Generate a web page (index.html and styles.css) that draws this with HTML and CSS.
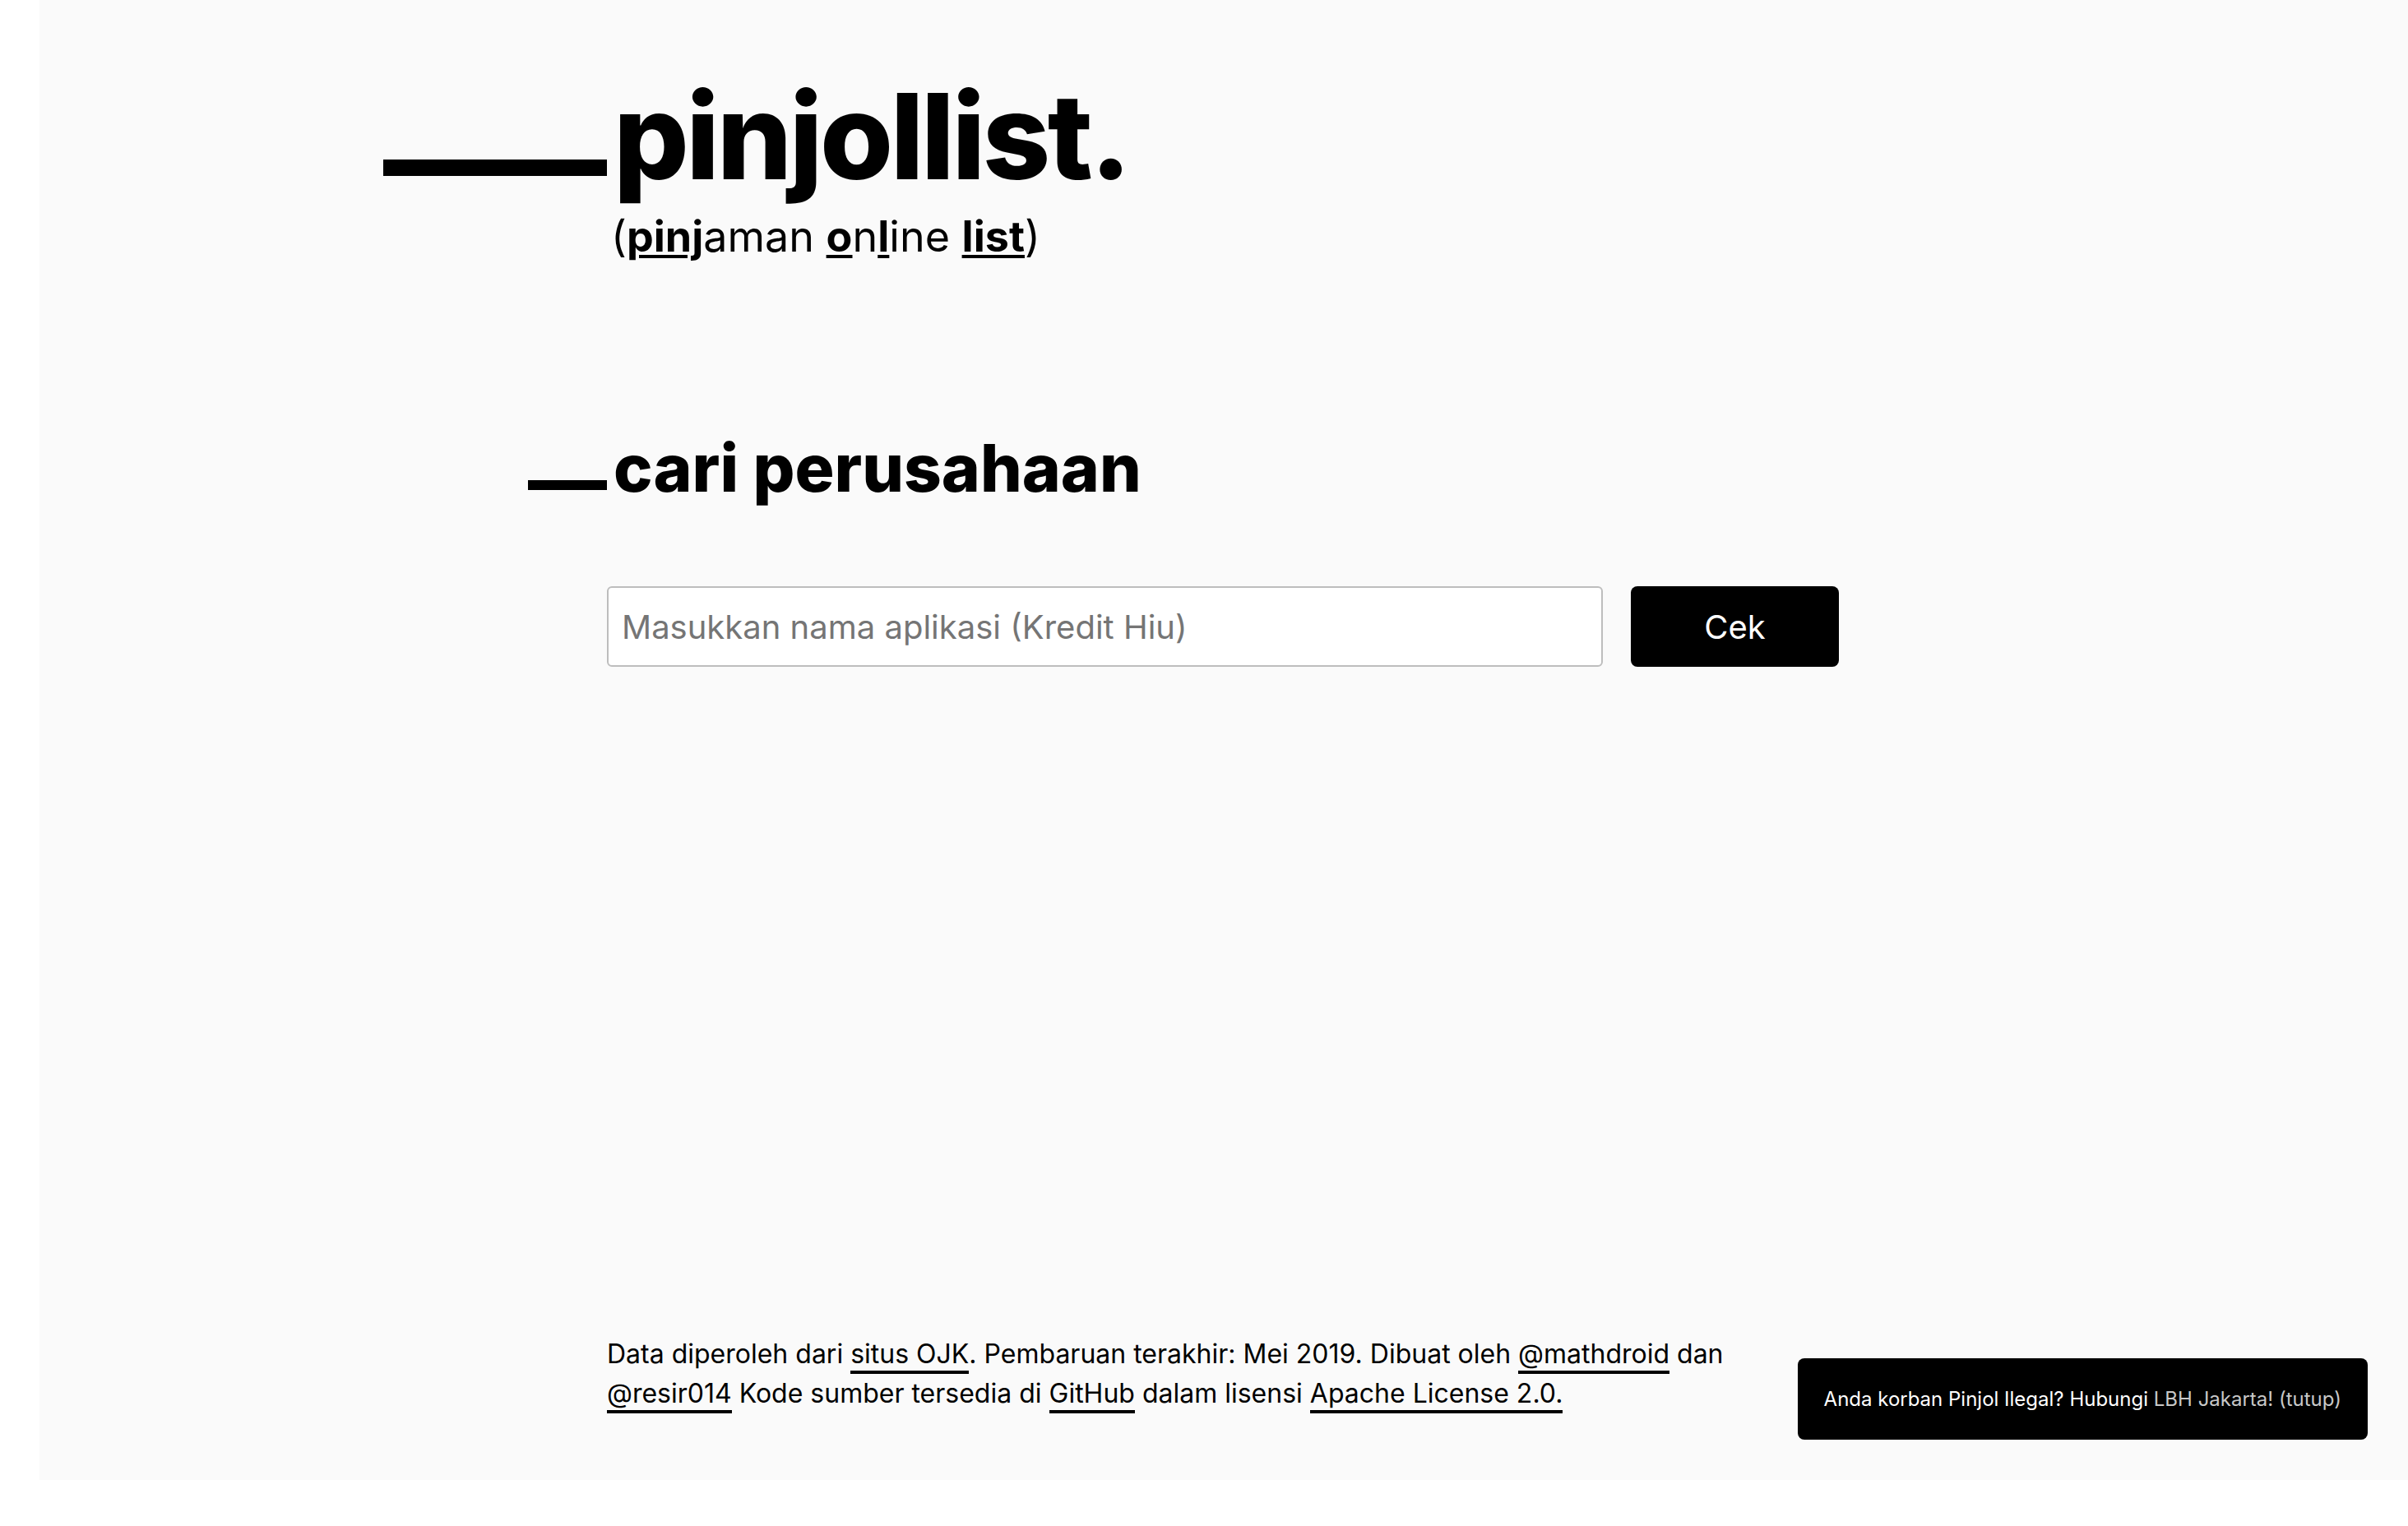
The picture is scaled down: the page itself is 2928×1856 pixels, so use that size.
FILE: index.html
```html
<!DOCTYPE html>
<html lang="id">
<head>
<meta charset="utf-8">
<title>pinjollist.</title>
<link rel="stylesheet" href="styles.css">
</head>
<body>
<div class="page">
  <main class="content">
    <header class="masthead">
      <h1 class="title"><span class="dash dash-lg"></span>pinjollist.</h1>
      <p class="subtitle">(<u><b>pinj</b></u>aman <u><b>o</b></u>n<u><b>l</b></u>ine <u><b>list</b></u>)</p>
    </header>
    <section class="search">
      <h2 class="section-title"><span class="dash dash-sm"></span>cari perusahaan</h2>
      <form class="search-form">
        <input class="search-input" type="text" placeholder="Masukkan nama aplikasi (Kredit Hiu)">
        <button class="search-button" type="button">Cek</button>
      </form>
    </section>
    <footer class="footer">
      <p>Data diperoleh dari <a href="#">situs OJK</a>. Pembaruan terakhir: Mei 2019. Dibuat oleh <a href="#">@mathdroid</a> dan <a href="#">@resir014</a> Kode sumber tersedia di <a href="#">GitHub</a> dalam lisensi <a href="#">Apache License 2.0.</a></p>
    </footer>
  </main>
  <div class="toast">Anda korban Pinjol Ilegal? Hubungi&nbsp;<a href="#" class="toast-link">LBH Jakarta!</a>&nbsp;<a href="#" class="toast-link">(tutup)</a></div>
</div>
</body>
</html>
```

FILE: styles.css
```css
* { box-sizing: border-box; }

html, body {
  margin: 0;
  padding: 0;
  background: #ffffff;
}

body {
  font-family: Inter, "Noto Sans", "Liberation Sans", sans-serif;
  color: #000;
}

.page {
  position: relative;
  margin-left: 48px;
  padding-right: 2px;
  min-height: 1800px;
  background: #fafafa;
  display: flex;
  flex-direction: column;
}

.content {
  width: 1498px;
  margin: 0 auto;
  padding-top: 94px;
  padding-bottom: 81px;
  flex: 1;
  display: flex;
  flex-direction: column;
}

.masthead { margin: 0; }

.title {
  margin: 0;
  font-size: 144px;
  line-height: 1;
  font-weight: 800;
  letter-spacing: -0.024em;
  white-space: nowrap;
}

.dash {
  display: inline-block;
  background: #000;
  vertical-align: baseline;
}

.dash-lg {
  width: 272px;
  height: 20px;
  margin-left: -272px;
  margin-right: 8px;
  margin-bottom: 4px;
}

.dash-sm {
  width: 96px;
  height: 12px;
  margin-left: -96px;
  margin-right: 8px;
  margin-bottom: 2px;
}

.subtitle {
  margin: 19px 0 0;
  padding-left: 5px;
  font-size: 52px;
  line-height: 1.2;
  font-weight: 400;
  white-space: nowrap;
}

.subtitle u {
  text-decoration: underline;
  text-decoration-thickness: 4px;
  text-underline-offset: 4px;
}

.subtitle b { font-weight: 700; }

.search { margin-top: 210px; }

.section-title {
  margin: 0;
  font-size: 80px;
  line-height: 1;
  font-weight: 800;
  letter-spacing: 0;
  white-space: nowrap;
}

.search-form {
  margin-top: 104px;
  display: flex;
  gap: 34px;
}

.search-input {
  flex: 1;
  height: 98px;
  padding: 0 16px;
  border: 2px solid #bdbdbd;
  border-radius: 6px;
  background: #fff;
  font-family: inherit;
  font-size: 40px;
  color: #000;
  outline: none;
}

.search-input::placeholder { color: #757575; }

.search-button {
  width: 253px;
  height: 98px;
  border: 0;
  border-radius: 8px;
  background: #000;
  color: #fff;
  font-family: inherit;
  font-size: 40px;
  cursor: pointer;
}

.footer {
  margin-top: auto;
  font-size: 32px;
  line-height: 48px;
}

.footer p { margin: 0; }

.footer a {
  color: #000;
  text-decoration: none;
  border-bottom: 4px solid #000;
  padding-bottom: 1px;
}

.toast {
  position: absolute;
  right: 49px;
  bottom: 49px;
  height: 99px;
  padding: 0 32px;
  display: flex;
  align-items: center;
  background: #000;
  color: #fff;
  border-radius: 8px;
  font-size: 24px;
  white-space: nowrap;
}

.toast-link {
  color: #c8c8c8;
  text-decoration: none;
}
```
